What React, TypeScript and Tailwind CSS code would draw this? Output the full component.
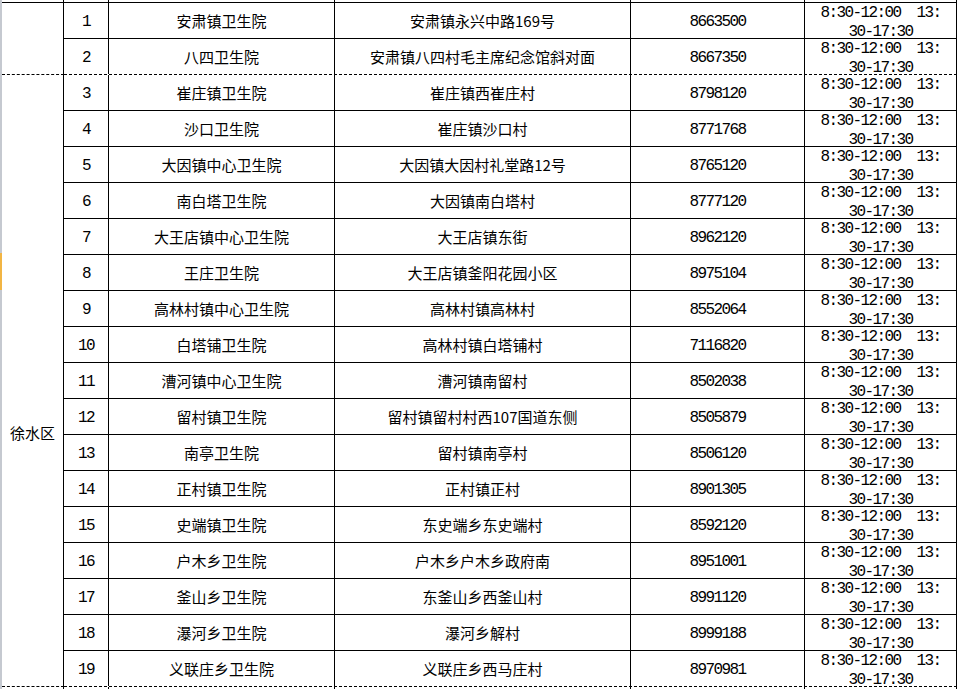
import React from 'react';

const ROWS = [
  { no: 1, name: '安肃镇卫生院', addr: '安肃镇永兴中路169号', tel: '8663500' },
  { no: 2, name: '八四卫生院', addr: '安肃镇八四村毛主席纪念馆斜对面', tel: '8667350' },
  { no: 3, name: '崔庄镇卫生院', addr: '崔庄镇西崔庄村', tel: '8798120' },
  { no: 4, name: '沙口卫生院', addr: '崔庄镇沙口村', tel: '8771768' },
  { no: 5, name: '大因镇中心卫生院', addr: '大因镇大因村礼堂路12号', tel: '8765120' },
  { no: 6, name: '南白塔卫生院', addr: '大因镇南白塔村', tel: '8777120' },
  { no: 7, name: '大王店镇中心卫生院', addr: '大王店镇东街', tel: '8962120' },
  { no: 8, name: '王庄卫生院', addr: '大王店镇釜阳花园小区', tel: '8975104' },
  { no: 9, name: '高林村镇中心卫生院', addr: '高林村镇高林村', tel: '8552064' },
  { no: 10, name: '白塔铺卫生院', addr: '高林村镇白塔铺村', tel: '7116820' },
  { no: 11, name: '漕河镇中心卫生院', addr: '漕河镇南留村', tel: '8502038' },
  { no: 12, name: '留村镇卫生院', addr: '留村镇留村村西107国道东侧', tel: '8505879' },
  { no: 13, name: '南亭卫生院', addr: '留村镇南亭村', tel: '8506120' },
  { no: 14, name: '正村镇卫生院', addr: '正村镇正村', tel: '8901305' },
  { no: 15, name: '史端镇卫生院', addr: '东史端乡东史端村', tel: '8592120' },
  { no: 16, name: '户木乡卫生院', addr: '户木乡户木乡政府南', tel: '8951001' },
  { no: 17, name: '釜山乡卫生院', addr: '东釜山乡西釜山村', tel: '8991120' },
  { no: 18, name: '瀑河乡卫生院', addr: '瀑河乡解村', tel: '8999188' },
  { no: 19, name: '义联庄乡卫生院', addr: '义联庄乡西马庄村', tel: '8970981' },
];

type RowData = (typeof ROWS)[number];

// thin strip that only carries the column lines (above / below the visible rows)
function Stub() {
  return (
    <div className="flex h-[2px]">
      <div className="w-[62px] shrink-0 border-r border-black" />
      <div className="w-[45px] shrink-0 border-r border-black" />
      <div className="w-[226px] shrink-0 border-r border-black" />
      <div className="w-[296px] shrink-0 border-r border-black" />
      <div className="w-[174px] shrink-0 border-r border-black" />
      <div className="w-[152px] shrink-0 border-r border-black" />
    </div>
  );
}

function Row({ r, last }: { r: RowData; last: boolean }) {
  return (
    <div className={`flex h-[36px] border-b border-black ${last ? 'border-dashed' : ''}`}>
      <div className="w-[45px] shrink-0 border-r border-solid border-black flex items-center justify-center pt-[3px] font-['Liberation_Mono',monospace] text-[16px] tracking-[-1.6px]">
        {r.no}
      </div>
      <div className="w-[226px] shrink-0 border-r border-solid border-black flex items-center justify-center pt-[2px] font-['Noto_Sans_CJK_SC',sans-serif] text-[15px]">
        {r.name}
      </div>
      <div className="w-[296px] shrink-0 border-r border-solid border-black flex items-center justify-center pt-[2px] font-['Noto_Sans_CJK_SC',sans-serif] text-[15px]">
        {r.addr}
      </div>
      <div className="w-[174px] shrink-0 border-r border-solid border-black flex items-center justify-center pt-[3px] font-['Liberation_Mono',monospace] text-[16px] tracking-[-1.6px]">
        {r.tel}
      </div>
      <div className="w-[152px] shrink-0 border-r border-solid border-black flex flex-col items-center pt-[1px] font-['Liberation_Mono',monospace] text-[16px] leading-[19px] tracking-[-1.6px] whitespace-pre">
        <span>8:30-12:00  13:</span>
        <span>30-17:30</span>
      </div>
    </div>
  );
}

export default function App() {
  const groupA = ROWS.slice(0, 2);
  const groupB = ROWS.slice(2);

  return (
    <div className="w-[959px] h-[689px] overflow-hidden bg-white text-black flex">
      {/* row header edge */}
      <div className="w-[2px] shrink-0 flex flex-col">
        <div className="h-[253px] bg-[#c5c9d0]" />
        <div className="h-[37px] bg-[#f2b544]" />
        <div className="flex-1 bg-[#c5c9d0]" />
      </div>

      <div className="w-[955px] shrink-0 flex flex-col">
        <Stub />
        <div className="h-[1px] bg-black" />

        {/* previous district (merged cell above) */}
        <div className="flex">
          <div className="w-[62px] shrink-0 border-r border-b border-black [border-bottom-style:dashed]" />
          <div className="flex flex-col">
            {groupA.map((r, i) => (
              <Row key={r.no} r={r} last={i === groupA.length - 1} />
            ))}
          </div>
        </div>

        {/* 徐水区 */}
        <div className="flex">
          <div className="w-[62px] shrink-0 border-r border-b border-black [border-bottom-style:dashed] flex justify-center pt-[349px] font-['Noto_Sans_CJK_SC',sans-serif] text-[15px] leading-[18px]">
            徐水区
          </div>
          <div className="flex flex-col">
            {groupB.map((r, i) => (
              <Row key={r.no} r={r} last={i === groupB.length - 1} />
            ))}
          </div>
        </div>

        <Stub />
      </div>
    </div>
  );
}
